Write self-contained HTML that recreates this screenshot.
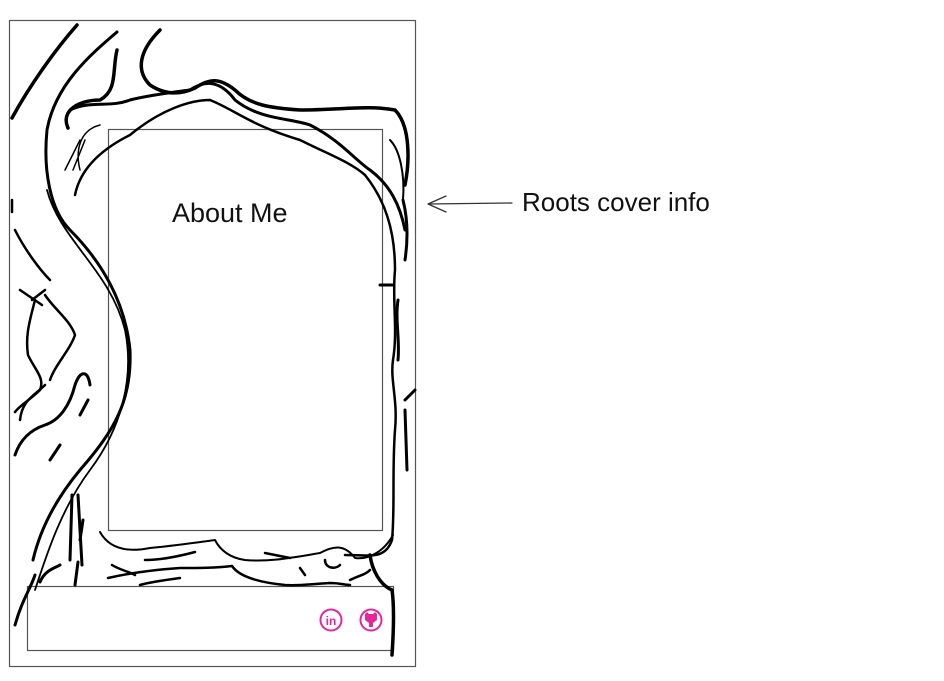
<!DOCTYPE html>
<html><head><meta charset="utf-8"><style>
html,body{margin:0;padding:0;background:#fff;width:944px;height:681px;overflow:hidden}
svg{display:block}
</style></head><body>
<svg width="944" height="681" viewBox="0 0 944 681" xmlns="http://www.w3.org/2000/svg">
<rect x="9.5" y="20.5" width="406" height="646" fill="none" stroke="#555" stroke-width="1.2"/>
<rect x="108.5" y="129.5" width="274" height="401" fill="none" stroke="#555" stroke-width="1.2"/>
<rect x="27.5" y="586.5" width="366" height="64" fill="none" stroke="#555" stroke-width="1.2"/>
<g fill="none" stroke="#000" stroke-linecap="round" stroke-linejoin="round">
<path d="M12,118 C30,85 55,50 77,25" stroke-width="3.5"/>
<path d="M117,32 C90,55 55,85 47,130 C43,170 50,210 70,230 C100,260 125,300 130,350 C132,400 115,430 80,470 C55,500 40,530 33,560" stroke-width="3"/>
<path d="M75,230 C40,300 70,200 120,300" stroke-width="0"/>
<path d="M62,230 C80,250 105,285 110,310" stroke-width="0"/>
<path d="M47,190 C60,240 110,270 125,330 C135,380 120,430 90,470 C60,510 45,560 35,590" stroke-width="1.8"/>
<path d="M47,180 C55,220 90,250 110,280" stroke-width="0"/>
<path d="M112,155 C100,100 40,150 70,180" stroke-width="0"/>
<path d="M160,30 C140,50 135,70 150,85 C165,95 180,95 195,88 C210,78 220,78 235,90 C250,105 270,108 300,110 C340,110 370,105 395,110 C410,125 410,160 405,185" stroke-width="3.5"/>
<path d="M117,50 C112,70 118,90 100,100 C80,100 60,110 68,128" stroke-width="3.5"/>
<path d="M70,110 C90,100 110,108 130,100 C150,95 175,92 190,90 C205,80 220,80 235,100 C260,120 290,118 310,125 C340,140 355,160 370,170 C390,185 400,205 405,230" stroke-width="3"/>
<path d="M75,195 C80,170 100,150 130,135 C160,110 190,100 210,100 C235,110 250,125 300,140 C330,155 350,162 365,175 C385,200 395,230 395,270 C392,300 398,330 393,360 C390,380 398,400 395,430 C392,470 395,510 392,540 C385,560 370,555 345,555" stroke-width="2.5"/>
<path d="M80,170 C75,150 80,130 100,125 M65,170 L80,140 M73,170 L85,140" stroke-width="1.5"/>
<path d="M100,532 C110,550 130,552 150,548 C180,545 200,542 215,540 C220,550 230,558 245,560 C270,562 290,558 320,553 C335,545 345,545 355,558 C370,560 385,550 393,535" stroke-width="2"/>
<path d="M108,578 C130,573 150,570 180,568 C200,568 215,568 232,566 C238,575 255,582 285,585 C300,586 310,584 330,583 C340,583 345,585 350,585" stroke-width="2.5"/>
<path d="M112,565 C120,570 130,572 135,575 M145,560 C160,560 180,556 195,552 M265,553 L290,558 M300,568 L305,575 M325,560 C325,568 335,570 340,565 M350,580 C360,575 365,575 370,570 M140,585 C150,582 165,580 180,578" stroke-width="2.5"/>
<path d="M370,555 C372,570 380,585 392,590 C395,610 393,640 392,655" stroke-width="3.5"/>
<path d="M15,625 C22,600 30,590 35,575 M40,582 C45,570 55,568 60,565 M75,585 L78,562 M72,495 L70,560 M78,495 L82,565 M80,540 L83,520" stroke-width="3"/>
<path d="M20,290 L42,305 M35,300 C30,320 25,335 28,355 C35,370 45,378 40,390 C30,400 20,405 15,412 M32,300 L45,290 M45,295 C55,310 70,320 75,335 C70,350 55,365 50,380" stroke-width="2.5"/>
<path d="M15,455 C20,440 30,430 45,425 C60,420 70,405 75,385 C80,370 88,370 90,385 M80,415 L88,400 M50,460 L60,445" stroke-width="3"/>
<path d="M12,200 L12,212 M15,230 C25,250 40,270 50,280 M20,420 C22,400 35,395 45,385" stroke-width="2.5"/>
<path d="M380,285 L393,285 M405,400 L415,390 M405,410 L407,470 M398,300 C395,320 400,340 398,360 M403,200 C408,220 408,240 405,260" stroke-width="3"/>
<path d="M390,140 C400,150 405,175 403,200" stroke-width="2"/>
</g>
<text x="172" y="222" font-family="Liberation Sans, sans-serif" font-size="27" fill="#111">About Me</text>
<g stroke="#333" stroke-width="1.3" fill="none" stroke-linecap="round">
<path d="M512,203 L428,204 M428,204 L446,196 M428,204 L446,212"/>
</g>
<text x="522" y="211" font-family="Liberation Sans, sans-serif" font-size="26" fill="#111">Roots cover info</text>
<g fill="none" stroke="#e6279a" stroke-width="2">
<circle cx="331" cy="620" r="10.5"/>
<circle cx="371" cy="620" r="10.5"/>
</g>
<text x="331" y="625" font-family="Liberation Sans, sans-serif" font-size="12" font-weight="bold" fill="#e6279a" text-anchor="middle">in</text>
<path d="M365,614 L367,612 L369,614 L373,614 L375,612 L377,614 L377,620 L373,623 L373,627 L369,627 L369,623 L365,620 Z" fill="#e6279a"/>
</svg>
</body></html>
